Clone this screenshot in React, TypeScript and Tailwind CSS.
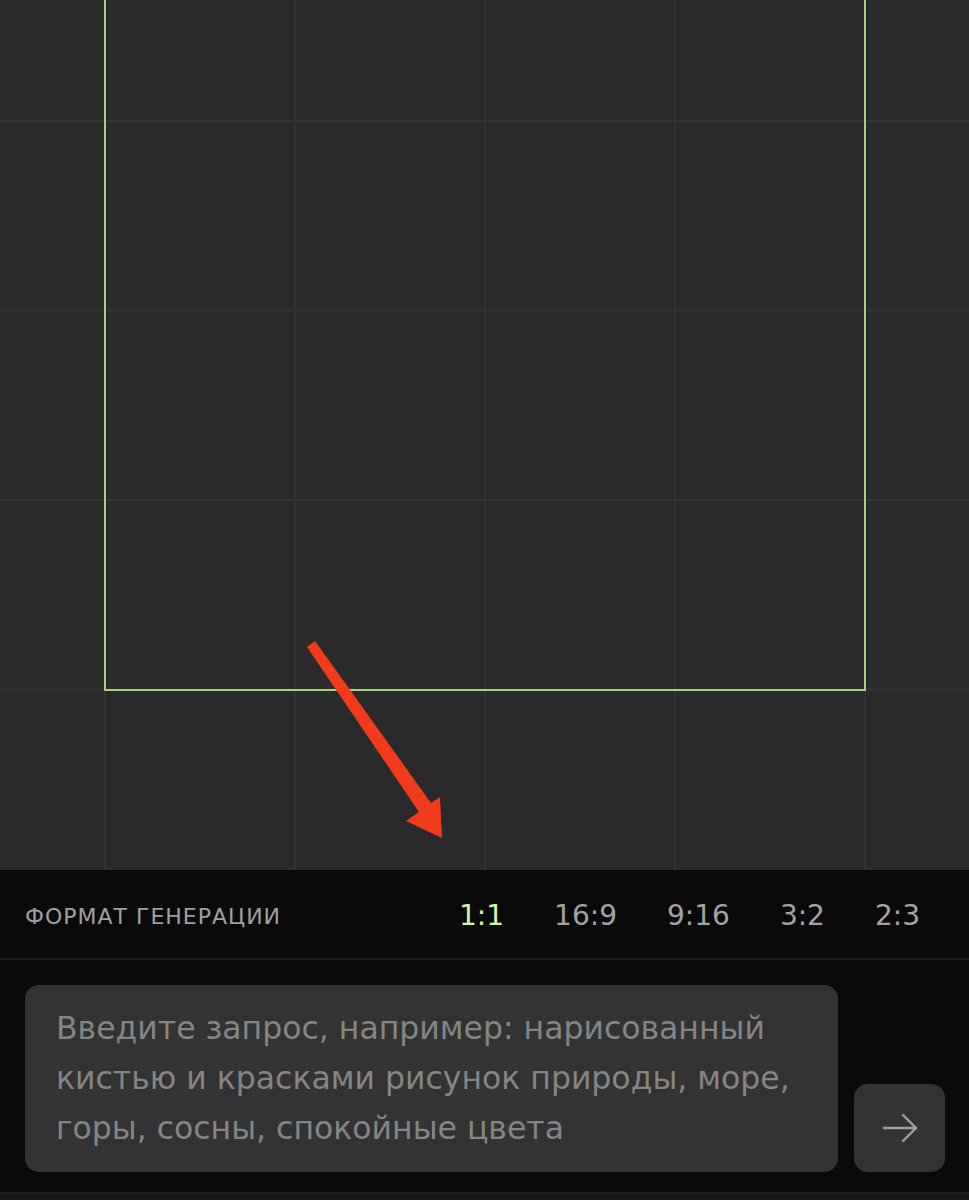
import React, { useState } from "react";

const FORMATS = ["1:1", "16:9", "9:16", "3:2", "2:3"];

export default function App() {
  const [format, setFormat] = useState("1:1");

  return (
    <div className="flex h-[1200px] w-full flex-col overflow-hidden bg-[#0a0a0a] font-['DejaVu_Sans',sans-serif]">
      {/* Canvas with grid */}
      <div className="relative h-[870px] shrink-0 overflow-hidden bg-[#2a2a2a] bg-[linear-gradient(to_right,#333333_2px,transparent_2px),linear-gradient(to_bottom,#333333_2px,transparent_2px)] bg-[size:190px_189.5px] bg-[position:104px_120px]">
        {/* Generation frame */}
        <div className="absolute left-[104px] top-[-72px] h-[763px] w-[762px] border-2 border-[#a8cf7c]" />

        {/* Annotation arrow */}
        <svg className="pointer-events-none absolute left-0 top-0" width="969" height="870" viewBox="0 0 969 870">
          <polygon points="307,647 315,641 431,803 440,797 442,838 406,821 419,812" fill="#f23b1c" />
        </svg>
      </div>

      {/* Format bar */}
      <div className="flex h-[90px] shrink-0 items-center justify-between border-b-2 border-[#1e1e1e] bg-[#0a0a0a] pl-[25px] pr-[49px] pt-[4px]">
        <span className="text-[22px] uppercase tracking-[1px] text-[#a0a0a0]">Формат генерации</span>
        <div className="flex items-center gap-[50px]">
          {FORMATS.map((f) => (
            <button
              key={f}
              type="button"
              onClick={() => setFormat(f)}
              className={
                f === format
                  ? "text-[28px] leading-none text-[#d6f59e]"
                  : "text-[28px] leading-none text-[#a3a3a3]"
              }
            >
              {f}
            </button>
          ))}
        </div>
      </div>

      {/* Prompt input */}
      <div className="flex items-end gap-[16px] bg-[#0a0a0a] pl-[25px] pr-[24px] pt-[25px] pb-[20px]">
        <div className="flex h-[187px] flex-1 rounded-[14px] bg-[#333333] pl-[31px] pr-[28px] py-[18px]">
          <p className="text-[31.5px] leading-[50px] text-[#858585]">
            Введите запрос, например: нарисованный кистью и красками рисунок природы, море, горы, сосны, спокойные цвета
          </p>
        </div>
        <button
          type="button"
          className="flex h-[88px] w-[91px] items-center justify-center rounded-[14px] bg-[#333333] text-[#a0a0a0]"
        >
          <svg width="36" height="30" viewBox="0 0 36 30" fill="none" stroke="currentColor" strokeWidth="2.4" strokeLinecap="round" strokeLinejoin="round">
            <path d="M2 15h32" />
            <path d="M21 2l13 13-13 13" />
          </svg>
        </button>
      </div>
      <div className="flex-1 border-t-2 border-[#1e1e1e] bg-[#161616]" />
    </div>
  );
}
